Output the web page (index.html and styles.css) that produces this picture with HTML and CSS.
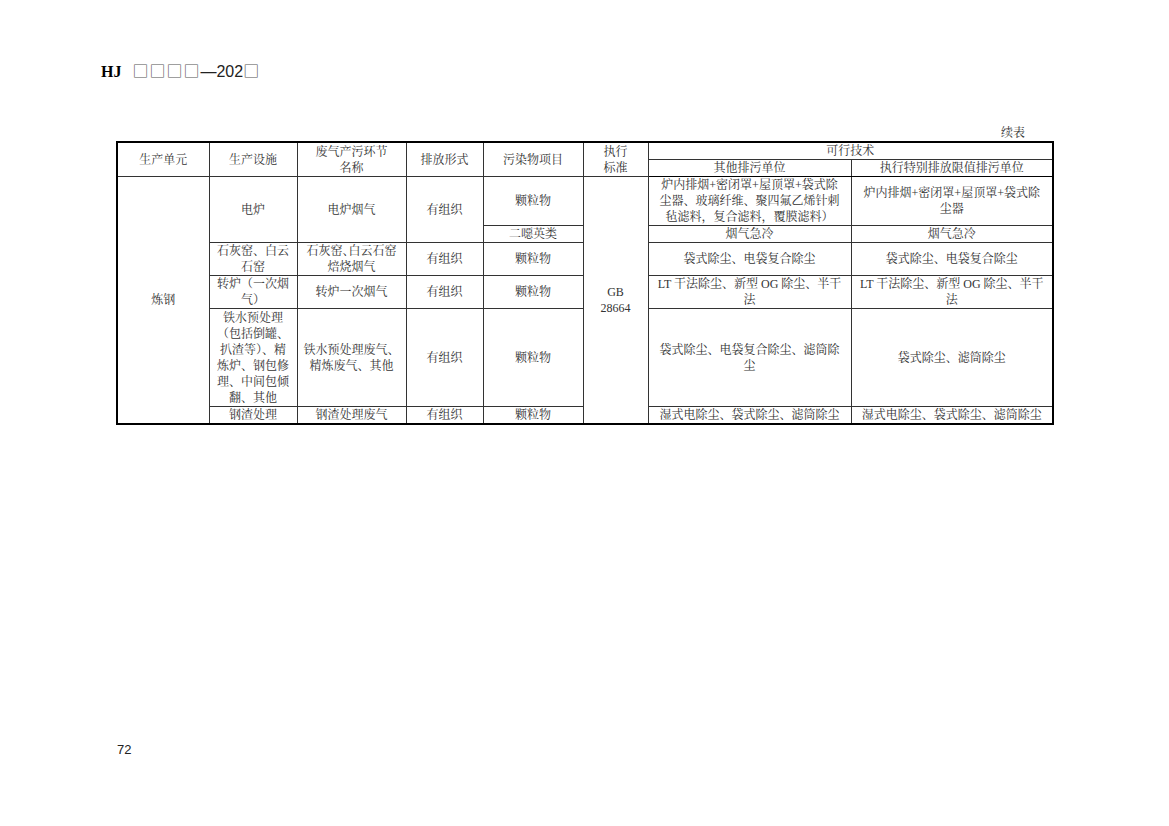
FILE: index.html
```html
<!DOCTYPE html>
<html lang="zh-CN">
<head>
<meta charset="utf-8">
<link rel="stylesheet" href="styles.css">
</head>
<body>
<div class="page">
  <div class="header"><span class="hj">HJ</span> <span class="code"><span class="boxes">□□□□</span>—202<span class="boxes">□</span></span></div>
  <div class="caption">续表</div>
  <table class="grid">
    <colgroup>
      <col class="c1"><col class="c2"><col class="c3"><col class="c4"><col class="c5"><col class="c6"><col class="c7"><col class="c8">
    </colgroup>
    <thead>
      <tr class="h1">
        <th rowspan="2">生产单元</th>
        <th rowspan="2">生产设施</th>
        <th rowspan="2">废气产污环节<br>名称</th>
        <th rowspan="2">排放形式</th>
        <th rowspan="2">污染物项目</th>
        <th rowspan="2">执行<br>标准</th>
        <th colspan="2">可行技术</th>
      </tr>
      <tr class="h1">
        <th>其他排污单位</th>
        <th>执行特别排放限值排污单位</th>
      </tr>
    </thead>
    <tbody>
      <tr class="r3">
        <td rowspan="7">炼钢</td>
        <td rowspan="2">电炉</td>
        <td rowspan="2">电炉烟气</td>
        <td rowspan="2">有组织</td>
        <td>颗粒物</td>
        <td rowspan="7">GB<br>28664</td>
        <td>炉内排烟+密闭罩+屋顶罩+袋式除<br>尘器、玻璃纤维、聚四氟乙烯针刺<br>毡滤料，复合滤料，覆膜滤料）</td>
        <td>炉内排烟+密闭罩+屋顶罩+袋式除<br>尘器</td>
      </tr>
      <tr class="r1">
        <td>二噁英类</td>
        <td>烟气急冷</td>
        <td>烟气急冷</td>
      </tr>
      <tr class="r2">
        <td>石灰窑、白云<br>石窑</td>
        <td>石灰窑<span class="tight">、</span>白云石窑<br>焙烧烟气</td>
        <td>有组织</td>
        <td>颗粒物</td>
        <td>袋式除尘、电袋复合除尘</td>
        <td>袋式除尘、电袋复合除尘</td>
      </tr>
      <tr class="r2">
        <td>转炉（一次烟<br>气）</td>
        <td>转炉一次烟气</td>
        <td>有组织</td>
        <td>颗粒物</td>
        <td>LT 干法除尘、新型 OG 除尘、半干<br>法</td>
        <td>LT 干法除尘、新型 OG 除尘、半干<br>法</td>
      </tr>
      <tr class="r6">
        <td>铁水预处理<br>（包括倒罐、<br>扒渣等）、精<br>炼炉、钢包修<br>理、中间包倾<br>翻、其他</td>
        <td>铁水预处理废气、<br>精炼废气、其他</td>
        <td>有组织</td>
        <td>颗粒物</td>
        <td>袋式除尘、电袋复合除尘、滤筒除<br>尘</td>
        <td>袋式除尘、滤筒除尘</td>
      </tr>
      <tr class="r1">
        <td>钢渣处理</td>
        <td>钢渣处理废气</td>
        <td>有组织</td>
        <td>颗粒物</td>
        <td>湿式电除尘、袋式除尘、滤筒除尘</td>
        <td>湿式电除尘、袋式除尘、滤筒除尘</td>
      </tr>
    </tbody>
  </table>
  <div class="pageno">72</div>
</div>
</body>
</html>
```

FILE: styles.css
```css
html, body {
  margin: 0;
  padding: 0;
  background: #fff;
}

.page {
  width: 1169px;
  min-height: 826px;
  padding-top: 60px;
  box-sizing: border-box;
}

.header {
  padding-left: 101px;
  height: 20px;
  line-height: 20px;
  font-size: 16px;
  color: #000;
  white-space: nowrap;
}

.hj {
  font-family: "Liberation Serif", serif;
  font-weight: bold;
  margin-right: 7px;
}

.code {
  font-family: "Liberation Sans", sans-serif;
  color: #222;
}

.boxes {
  font-family: "Noto Sans CJK SC", "DejaVu Sans", sans-serif;
  letter-spacing: 1px;
  color: #555;
}

.caption {
  margin-top: 45px;
  width: 1025px;
  text-align: right;
  font-family: "Liberation Serif", "Noto Serif CJK SC", "Noto Sans CJK SC", serif;
  font-size: 12px;
  line-height: 16px;
  color: #333;
}

.grid {
  margin-left: 116px;
  border-collapse: collapse;
  border: 2px solid #000;
  table-layout: fixed;
  width: 936px;
  font-family: "Liberation Serif", "Noto Serif CJK SC", "Noto Sans CJK SC", serif;
  font-size: 12px;
  line-height: 16px;
  color: #333;
}

.c1 { width: 92px; }
.c2 { width: 88px; }
.c3 { width: 109px; }
.c4 { width: 77px; }
.c5 { width: 100px; }
.c6 { width: 65px; }
.c7 { width: 203px; }
.c8 { width: 202px; }

.grid th,
.grid td {
  border: 1px solid #333;
  padding: 0 1px;
  text-align: center;
  vertical-align: middle;
  font-weight: normal;
  white-space: nowrap;
}

.grid thead tr:last-child th {
  border-bottom: 1px solid #000;
}

.h1 { height: 17px; }
.r1 { height: 17px; }
.r2 { height: 33px; }
.r3 { height: 49px; }
.r6 { height: 98px; }

.tight {
  letter-spacing: -6px;
}

.pageno {
  margin-top: 317px;
  padding-left: 117px;
  font-family: "Liberation Sans", sans-serif;
  font-size: 13px;
  line-height: 16px;
  color: #222;
}
```
